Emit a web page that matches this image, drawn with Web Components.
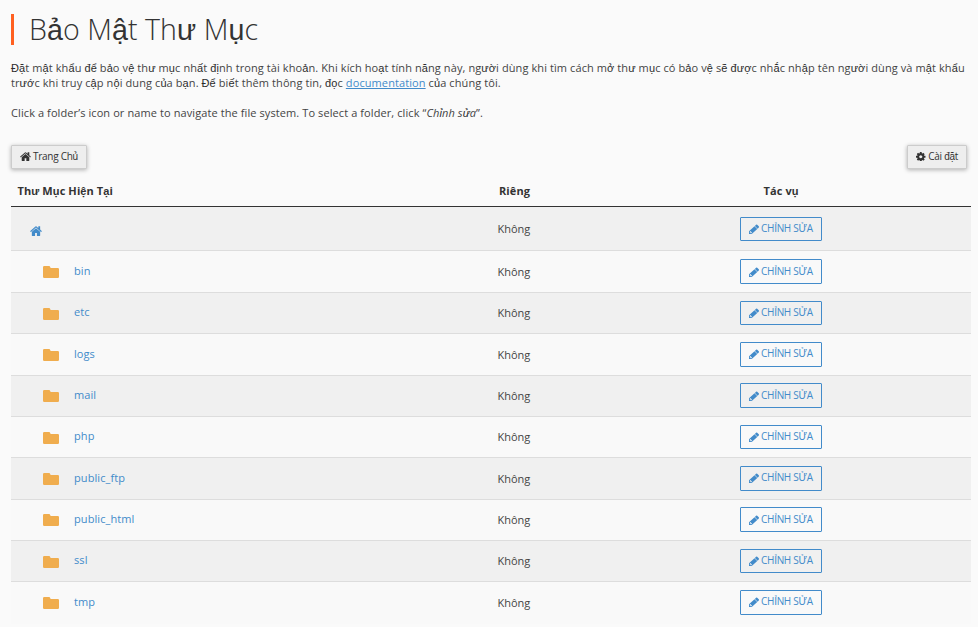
<!DOCTYPE html>
<html lang="vi">
<head>
<meta charset="utf-8">
<title>Bảo Mật Thư Mục</title>
<style>
html{background:#fafafa}
body{margin:0;height:627px;overflow:hidden;background:#fafafa;color:#333;font:11px/15px "Open Sans","Liberation Sans",sans-serif}
</style>
</head>
<body>
<privacy-page></privacy-page>
<script>
// Vietnamese letters outside Latin-1 use the fallback face.
function mixed(root){
  const walker=document.createTreeWalker(root,NodeFilter.SHOW_TEXT),nodes=[];
  while(walker.nextNode()) if(!walker.currentNode.parentElement?.closest('style,svg')) nodes.push(walker.currentNode);
  for(const n of nodes){
    if(!/[\u0100-\u1eff]/.test(n.data)) continue;
    const f=document.createDocumentFragment();
    for(const part of n.data.split(/([\u0100-\u1eff]+)/)){
      if(!part) continue;
      if(/[\u0100-\u1eff]/.test(part)){const s=document.createElement('span');s.className='vn';s.textContent=part;f.append(s)}
      else f.append(part);
    }
    n.replaceWith(f);
  }
}
const shared='.vn{font-family:"Liberation Sans",sans-serif;line-height:0}*{box-sizing:border-box}';
class Base extends HTMLElement{
  connectedCallback(){
    if(this.shadowRoot) return;
    const r=this.attachShadow({mode:'open'});
    r.innerHTML='<style>'+shared+this.css()+'</style>'+this.html();
    mixed(r);
  }
}
const paths={
  home:['0 0 1664 1312','M1408 768v480q0 26-19 45t-45 19H960V928H704v384H320q-26 0-45-19t-19-45V768q0-1 .5-3t.5-3l575-474 575 474q1 2 1 6zm223-69l-62 74q-8 9-21 11h-3q-13 0-21-7L832 200 140 777q-12 8-24 7-13-2-21-11l-62-74q-8-10-7-23.500t11-21.500L756 55q32-26 76-26t76 26l244 204V64q0-14 9-23t23-9h192q14 0 23 9t9 23v408l219 182q10 8 11 21.500t-7 23.500z'],
  cog:['0 0 1536 1536','M1024 768q0-106-75-181t-181-75-181 75-75 181 75 181 181 75 181-75 75-181zm512-109v222q0 12-8 23t-20 13l-185 28q-19 54-39 91 35 50 107 138 10 12 10 25t-9 23q-27 37-99 108t-94 71q-12 0-26-9l-138-108q-44 23-91 38-16 136-29 186-7 28-36 28H657q-14 0-24.500-8.500T621 1506l-28-184q-49-16-90-37l-141 107q-10 9-25 9-14 0-25-11-126-114-165-168-7-10-7-23 0-12 8-23 15-21 51-66.500t54-70.500q-27-50-41-99L29 913q-13-2-21-12.500T0 877V655q0-12 8-23t19-13l186-28q14-46 39-92-40-57-107-138-10-12-10-24 0-10 9-23 26-36 98.500-107.500T337 135q13 0 26 10l138 107q44-23 91-38 16-136 29-186 7-28 36-28h222q14 0 24.500 8.500T915 30l28 184q49 16 90 37l142-107q9-9 24-9 13 0 25 10 129 119 165 170 7 8 7 22 0 12-8 23-15 21-51 66.500t-54 70.500q26 50 41 98l183 28q13 2 21 12.500t8 23.500z'],
  pencil:['0 0 1515 1515','M363 1400l91-91-235-235-100 91v107h128v128h107zM832 352l416 416-832 747H0v-416zm683 96q0 53-37 90l-166 166-416-416 166-165q36-38 90-38 53 0 91 38l235 234q37 39 37 91z'],
  folder:['0 0 16 12','M0 1.200Q0 0 1.200 0H6q1 0 1.200.9l.1.600q.1.400.7.400h6.700Q16 1.900 16 3v7.800Q16 12 14.800 12H1.200Q0 12 0 10.800z']
};
class GlyphIcon extends Base{
  css(){return ':host{display:inline-block;flex:none}svg{display:block;width:100%;height:100%;fill:currentColor}'}
  html(){const [b,d]=paths[this.getAttribute('name')];return `<svg viewBox="${b}" preserveAspectRatio="none"><path fill-rule="evenodd" d="${d}"/></svg>`}
}
class PageTitle extends Base{
  css(){return ':host{display:flex;align-items:center;height:31px;border-left:3px solid #ff6020;padding-left:15px}h1{margin:-2px 0 0;font-weight:300;font-size:28.600px;letter-spacing:.05px;line-height:31px;white-space:nowrap}'}
  html(){return '<h1>'+this.getAttribute('text')+'</h1>'}
}
class ToolButton extends Base{
  css(){return ':host{display:flex;align-items:center;height:24.400px;padding:0 8px;border:1px solid #ccc;border-radius:1px;background:#eee;box-shadow:0 1px 4px rgba(0,0,0,.3);font-size:10px;letter-spacing:-.28px;line-height:20px;white-space:nowrap}div{padding-bottom:2px}glyph-icon{width:11px;height:9px;margin:-1px 2px 0 0}glyph-icon[name=cog]{width:9.500px;height:9.500px;margin-right:2.500px}'}
  html(){return `<glyph-icon name="${this.getAttribute('icon')}"></glyph-icon><div>${this.getAttribute('text')}</div>`}
}
class EditButton extends Base{
  css(){return ':host{display:flex;align-items:center;width:82px;height:24.500px;padding:0 8px;border:1px solid #428bca;border-radius:1px;color:#428bca;font-size:10px;letter-spacing:-.28px;line-height:20px;white-space:nowrap}glyph-icon{width:10px;height:10px;margin:0 2px 0 0}span.t{padding-bottom:2px}'}
  html(){return '<glyph-icon name="pencil"></glyph-icon><span class="t">CHỈNH SỬA</span>'}
}
class FolderRow extends Base{
  css(){return `:host{display:grid;grid-template-columns:486.500px 242.500px 1fr;height:41.350px;align-items:center;border-bottom:1px solid #ddd;background:#f9f9f9;color:#444}
  :host([odd]){background:#f0f0f0}:host([root]){height:44.060px}:host([last]){border-bottom-color:transparent}
  .name{display:flex;align-items:center;padding-left:32px;color:#428bca;letter-spacing:.08px}
  .name span{margin:-2.500px 0 0 15px}
  .state{margin-top:-.5px}
  glyph-icon{color:#f0ad4e;width:16px;height:12px;margin-top:1px}
  :host([root]) .name{padding-left:19px}:host([root]) glyph-icon{color:#428bca;width:12px;height:10px;margin-top:4px}`}
  html(){const n=this.getAttribute('name');
   return `<div class="name"><glyph-icon name="${n?'folder':'home'}"></glyph-icon>${n?`<span>${n}</span>`:''}</div><div class="state">Không</div><edit-button></edit-button>`}
}
class FolderTable extends Base{
  css(){return '.head{display:grid;grid-template-columns:488px 264.500px 1fr;height:32px;border-bottom:1px solid #333;font-weight:700;letter-spacing:.1px;line-height:31px}.head>:first-child{padding-left:6.500px}'}
  html(){const names=['','bin','etc','logs','mail','php','public_ftp','public_html','ssl','tmp'];
   return '<div class="head"><div>Thư Mục Hiện Tại</div><div>Riêng</div><div>Tác vụ</div></div>'+names.map((n,i)=>`<folder-row ${n?`name="${n}"`:'root'} ${i%2?'':'odd'} ${i===9?'last':''}></folder-row>`).join('')}
}
class PrivacyPage extends Base{
  css(){return ':host{display:block;padding:14px 7px 0 11px}.intro{margin-top:15px;white-space:nowrap;letter-spacing:.094px;color:#444}.intro .vn{color:#2b2b2b}p{margin:0 0 15px}a{color:#428bca}.tools{display:flex;justify-content:space-between;margin:25px 4px 6.050px 0}folder-table{display:block}'}
  html(){return `<page-title text="Bảo Mật Thư Mục"></page-title>
  <div class="intro"><p>Đặt mật khẩu để bảo vệ thư mục nhất định trong tài khoản. Khi kích hoạt tính năng này, người dùng khi tìm cách mở thư mục có bảo vệ sẽ được nhắc nhập tên người dùng và mật khẩu<br>trước khi truy cập nội dung của bạn. Để biết thêm thông tin, đọc <a href="#">documentation</a> của chúng tôi.</p>
  <p>Click a folder’s icon or name to navigate the file system. To select a folder, click “<em>Chỉnh sửa</em>”.</p></div>
  <div class="tools"><tool-button icon="home" text="Trang Chủ"></tool-button><tool-button icon="cog" text="Cài đặt"></tool-button></div>
  <folder-table></folder-table>`}
}
customElements.define('glyph-icon',GlyphIcon);
customElements.define('page-title',PageTitle);
customElements.define('tool-button',ToolButton);
customElements.define('edit-button',EditButton);
customElements.define('folder-row',FolderRow);
customElements.define('folder-table',FolderTable);
customElements.define('privacy-page',PrivacyPage);
</script>
</body>
</html>
